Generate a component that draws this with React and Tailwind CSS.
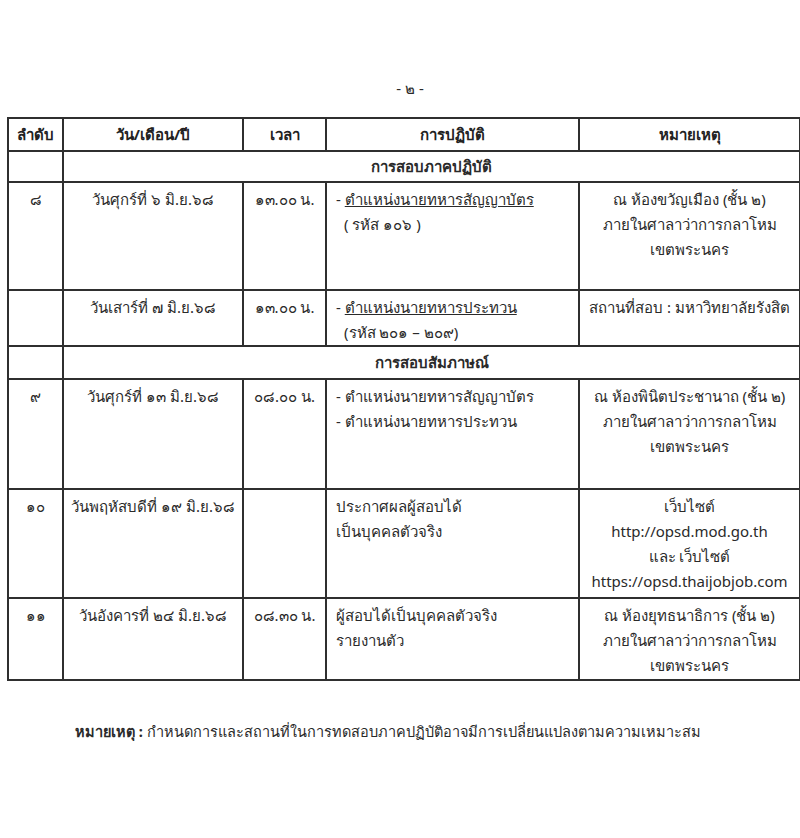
import React from "react";

function Cell({ children, className = "" }) {
  return (
    <td className={"border-2 border-[#2f2f2f] align-top px-1 pt-[4px] " + className}>
      {children}
    </td>
  );
}

export default function App() {
  return (
    <div className="w-[800px] h-[838px] bg-white text-[#2a2a2a] text-[15px] leading-[25px] font-['Tahoma','Noto_Sans','DejaVu_Sans',sans-serif]">
      <div className="pt-[76px] pl-[20px] text-center">- ๒ -</div>

      <table className="ml-[7px] mt-[16px] w-[792px] table-fixed border-collapse">
        <colgroup>
          <col className="w-[55px]" />
          <col className="w-[180px]" />
          <col className="w-[83px]" />
          <col className="w-[253px]" />
          <col className="w-[221px]" />
        </colgroup>
        <thead>
          <tr className="h-[33px] text-[#222]">
            <th className="border-2 border-[#2f2f2f] font-bold">ลำดับ</th>
            <th className="border-2 border-[#2f2f2f] font-bold">วัน/เดือน/ปี</th>
            <th className="border-2 border-[#2f2f2f] font-bold">เวลา</th>
            <th className="border-2 border-[#2f2f2f] font-bold">การปฏิบัติ</th>
            <th className="border-2 border-[#2f2f2f] font-bold">หมายเหตุ</th>
          </tr>
        </thead>
        <tbody>
          <tr className="h-[31px]">
            <td className="border-2 border-[#2f2f2f]"></td>
            <td colSpan={4} className="border-2 border-[#2f2f2f] text-center font-bold">
              การสอบภาคปฏิบัติ
            </td>
          </tr>
          <tr className="h-[108px]">
            <Cell className="text-center">๘</Cell>
            <Cell className="text-center">วันศุกร์ที่ ๖ มิ.ย.๖๘</Cell>
            <Cell className="text-center">๑๓.๐๐ น.</Cell>
            <Cell className="pl-[9px]">
              <div>
                - <span className="underline">ตำแหน่งนายทหารสัญญาบัตร</span>
              </div>
              <div className="pl-2">( รหัส ๑๐๖ )</div>
            </Cell>
            <Cell className="text-center">
              <div>ณ ห้องขวัญเมือง (ชั้น ๒)</div>
              <div>ภายในศาลาว่าการกลาโหม</div>
              <div>เขตพระนคร</div>
            </Cell>
          </tr>
          <tr className="h-[54px]">
            <Cell></Cell>
            <Cell className="text-center">วันเสาร์ที่ ๗ มิ.ย.๖๘</Cell>
            <Cell className="text-center">๑๓.๐๐ น.</Cell>
            <Cell className="pl-[9px]">
              <div>
                - <span className="underline">ตำแหน่งนายทหารประทวน</span>
              </div>
              <div className="pl-2">(รหัส ๒๐๑ – ๒๐๙)</div>
            </Cell>
            <Cell className="text-center">สถานที่สอบ : มหาวิทยาลัยรังสิต</Cell>
          </tr>
          <tr className="h-[33px]">
            <td className="border-2 border-[#2f2f2f]"></td>
            <td colSpan={4} className="border-2 border-[#2f2f2f] text-center font-bold">
              การสอบสัมภาษณ์
            </td>
          </tr>
          <tr className="h-[110px]">
            <Cell className="text-center">๙</Cell>
            <Cell className="text-center">วันศุกร์ที่ ๑๓ มิ.ย.๖๘</Cell>
            <Cell className="text-center">๐๘.๐๐ น.</Cell>
            <Cell className="pl-[9px]">
              <div>- ตำแหน่งนายทหารสัญญาบัตร</div>
              <div>- ตำแหน่งนายทหารประทวน</div>
            </Cell>
            <Cell className="text-center">
              <div>ณ ห้องพินิตประชานาถ (ชั้น ๒)</div>
              <div>ภายในศาลาว่าการกลาโหม</div>
              <div>เขตพระนคร</div>
            </Cell>
          </tr>
          <tr className="h-[109px]">
            <Cell className="text-center">๑๐</Cell>
            <Cell className="text-center">วันพฤหัสบดีที่ ๑๙ มิ.ย.๖๘</Cell>
            <Cell></Cell>
            <Cell className="pl-[9px]">
              <div>ประกาศผลผู้สอบได้</div>
              <div>เป็นบุคคลตัวจริง</div>
            </Cell>
            <Cell className="text-center">
              <div>เว็บไซต์</div>
              <div>http://opsd.mod.go.th</div>
              <div>และ เว็บไซต์</div>
              <div>https://opsd.thaijobjob.com</div>
            </Cell>
          </tr>
          <tr className="h-[82px]">
            <Cell className="text-center">๑๑</Cell>
            <Cell className="text-center">วันอังคารที่ ๒๔ มิ.ย.๖๘</Cell>
            <Cell className="text-center">๐๘.๓๐ น.</Cell>
            <Cell className="pl-[9px]">
              <div>ผู้สอบได้เป็นบุคคลตัวจริง</div>
              <div>รายงานตัว</div>
            </Cell>
            <Cell className="text-center">
              <div>ณ ห้องยุทธนาธิการ (ชั้น ๒)</div>
              <div>ภายในศาลาว่าการกลาโหม</div>
              <div>เขตพระนคร</div>
            </Cell>
          </tr>
        </tbody>
      </table>

      <p className="mt-[38px] pl-[75px] text-[14.5px]">
        <span className="font-bold">หมายเหตุ :</span>{" "}
        กำหนดการและสถานที่ในการทดสอบภาคปฏิบัติอาจมีการเปลี่ยนแปลงตามความเหมาะสม
      </p>
    </div>
  );
}
